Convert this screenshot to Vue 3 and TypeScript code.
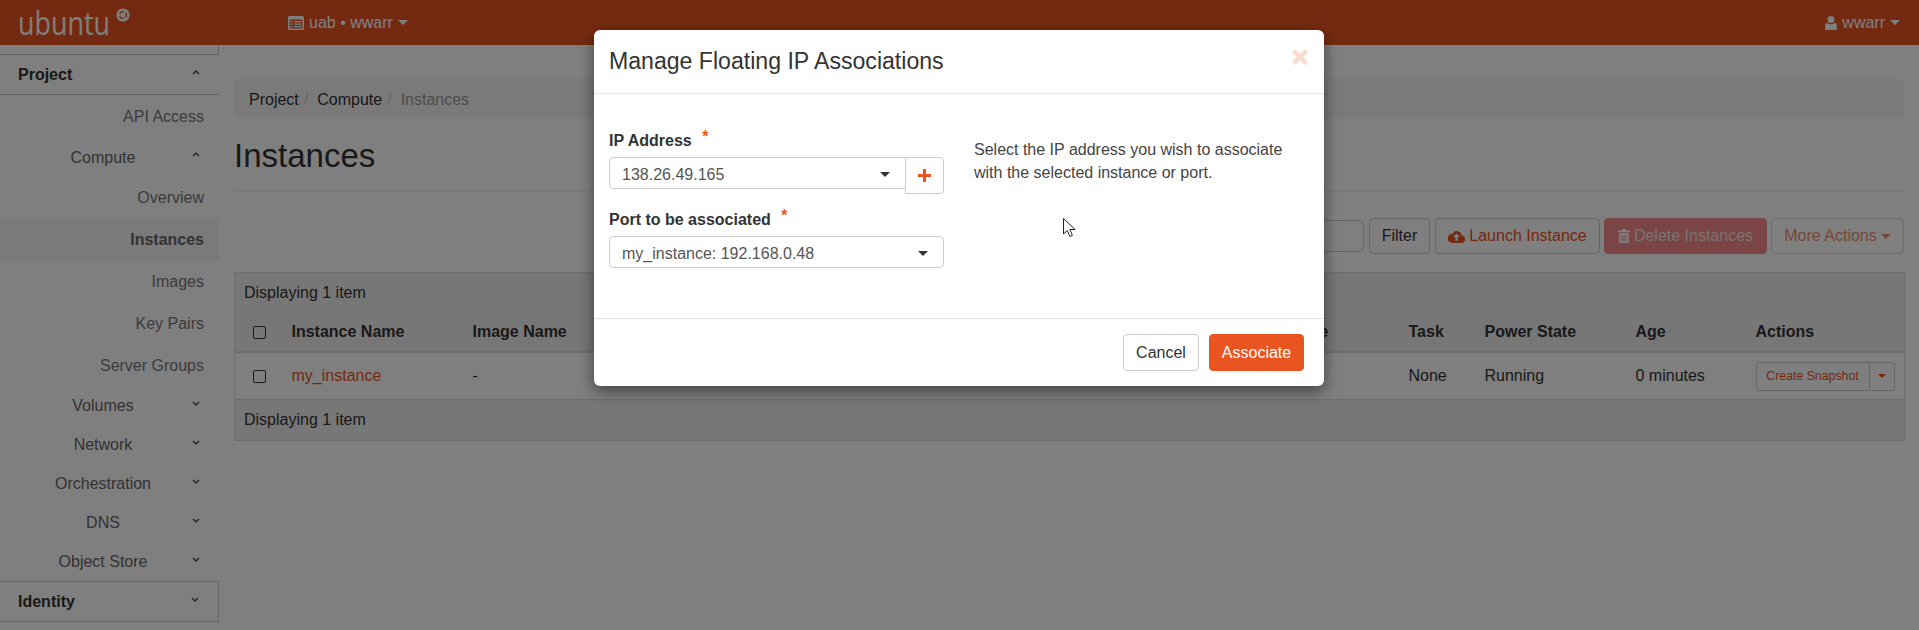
<script setup lang="ts">
interface NavItem {
  label: string
  kind: 'leaf' | 'group' | 'compute' | 'overview'
  active?: boolean
}

const navItems: NavItem[] = [
  { label: 'API Access', kind: 'leaf' },
  { label: 'Compute', kind: 'compute' },
  { label: 'Overview', kind: 'overview' },
  { label: 'Instances', kind: 'leaf', active: true },
  { label: 'Images', kind: 'leaf' },
  { label: 'Key Pairs', kind: 'leaf' },
  { label: 'Server Groups', kind: 'leaf' },
  { label: 'Volumes', kind: 'group' },
  { label: 'Network', kind: 'group' },
  { label: 'Orchestration', kind: 'group' },
  { label: 'DNS', kind: 'group' },
  { label: 'Object Store', kind: 'group' },
]

const columns = ['Instance Name', 'Image Name', 'Availability Zone', 'Task', 'Power State', 'Age', 'Actions']
</script>

<template>
  <div class="page">
    <header class="navbar">
      <div class="brand">
        <span class="brand-word">ubuntu</span>
        <svg class="brand-mark" viewBox="0 0 14 14" width="14" height="14">
          <circle cx="7" cy="7" r="6.6" fill="#fff" />
          <circle cx="7" cy="7" r="3.4" fill="none" stroke="#e95420" stroke-width="1.4" />
          <circle cx="3.3" cy="7" r="1.1" fill="#fff" />
          <circle cx="8.9" cy="3.8" r="1.1" fill="#fff" />
          <circle cx="8.9" cy="10.2" r="1.1" fill="#fff" />
        </svg>
      </div>
      <div class="nav-project">
        <svg class="table-icon" viewBox="0 0 16 14" width="16" height="14">
          <path d="M1.500 0h13A1.500 1.500 0 0 1 16 1.500v11a1.500 1.500 0 0 1-1.500 1.500h-13A1.500 1.500 0 0 1 0 12.500v-11A1.500 1.500 0 0 1 1.500 0zM1.500 3.500v9h13v-9zm1 1.500h2v1.300h-2zm3.500 0h7.500v1.300H6zM2.500 7.500h2v1.300h-2zm3.500 0h7.500v1.300H6zM2.500 10h2v1.300h-2zm3.500 0h7.500v1.300H6z" fill="#fff" fill-rule="evenodd" />
        </svg>
        <span>uab • wwarr</span>
        <i class="caret" />
      </div>
      <div class="nav-user">
        <svg viewBox="0 0 12 14" width="12" height="14">
          <path d="M6 0a3.500 3.500 0 0 1 3.500 3.500A3.500 3.500 0 0 1 6 7 3.500 3.500 0 0 1 2.500 3.500 3.500 3.500 0 0 1 6 0zM2.300 6.800C3.300 7.800 4.600 8.300 6 8.300s2.700-.5 3.700-1.500C11.300 7 12 8.400 12 10.500v2c0 1-.6 1.500-1.500 1.500h-9C.6 14 0 13.500 0 12.500v-2C0 8.400.7 7 2.300 6.800z" fill="#fff" />
        </svg>
        <span>wwarr</span>
        <i class="caret" />
      </div>
    </header>

    <div class="layout">
      <aside class="sidebar">
        <div class="side-stub" />
        <div class="side-head side-head--open">
          <span>Project</span>
          <svg class="chev" viewBox="0 0 8 5" width="8" height="5"><path d="M1 4l3-3 3 3" /></svg>
        </div>
        <div
          v-for="item in navItems"
          :key="item.label"
          class="side-item"
          :class="[`side-item--${item.kind}`, { 'side-item--active': item.active }]"
        >
          <span>{{ item.label }}</span>
          <svg v-if="item.kind === 'compute'" class="chev" viewBox="0 0 8 5" width="8" height="5"><path d="M1 4l3-3 3 3" /></svg>
          <svg v-if="item.kind === 'group'" class="chev" viewBox="0 0 8 5" width="8" height="5"><path d="M1 1l3 3 3-3" /></svg>
        </div>
        <div class="side-head side-head--closed">
          <span>Identity</span>
          <svg class="chev" viewBox="0 0 8 5" width="8" height="5"><path d="M1 1l3 3 3-3" /></svg>
        </div>
      </aside>

      <main class="content">
        <nav class="breadcrumb">
          <span>Project</span><em>/</em>
          <span>Compute</span><em>/</em>
          <span class="crumb-current">Instances</span>
        </nav>
        <div class="page-header">
          <h1>Instances</h1>
        </div>
        <div class="toolbar">
          <div class="search" />
          <button class="btn btn-filter">Filter</button>
          <button class="btn btn-launch">
            <svg viewBox="0 0 16 12" width="17" height="13">
              <path d="M12.800 5A4.500 4.500 0 0 0 4.200 3.600 3.500 3.500 0 0 0 3.500 12h9a3.500 3.500 0 0 0 .3-7zM8 3l3.200 3.500H9.200V10H6.800V6.500H4.800z" fill="#e95420" fill-rule="evenodd" />
            </svg>
            Launch Instance
          </button>
          <button class="btn btn-delete">
            <svg viewBox="0 0 11 13" width="12" height="14">
              <path d="M3.500 1.500 4.200 0h2.600l.7 1.500H11V3H0V1.500zM1 4h9v8a1 1 0 0 1-1 1H2a1 1 0 0 1-1-1zm2 1.500V11.500h1V5.500zm2 0V11.500h1V5.500zm2 0V11.500h1V5.500z" fill="#fff" fill-rule="evenodd" />
            </svg>
            Delete Instances
          </button>
          <button class="btn btn-more">More Actions <i class="caret" /></button>
        </div>

        <table class="table">
          <colgroup>
            <col class="col-check" />
            <col class="col-name" />
            <col class="col-image" />
            <col class="col-zone" />
            <col class="col-task" />
            <col class="col-power" />
            <col class="col-age" />
            <col class="col-actions" />
          </colgroup>
          <thead>
            <tr class="row-summary"><td colspan="8">Displaying 1 item</td></tr>
            <tr class="row-head">
              <th><span class="check" /></th>
              <th v-for="col in columns" :key="col">{{ col }}</th>
            </tr>
          </thead>
          <tbody>
            <tr class="row-data">
              <td><span class="check" /></td>
              <td class="link">my_instance</td>
              <td>-</td>
              <td>nova</td>
              <td>None</td>
              <td>Running</td>
              <td>0 minutes</td>
              <td>
                <div class="split">
                  <span class="split-main">Create Snapshot</span>
                  <span class="split-toggle"><i class="caret" /></span>
                </div>
              </td>
            </tr>
          </tbody>
          <tfoot>
            <tr class="row-summary row-summary--foot"><td colspan="8">Displaying 1 item</td></tr>
          </tfoot>
        </table>
      </main>
    </div>

    <div class="backdrop">
      <section class="modal">
        <div class="modal-header">
          <h3>Manage Floating IP Associations</h3>
          <svg class="close" viewBox="0 0 16 16" width="16" height="16">
            <path d="M1.500 1.500l13 13M14.500 1.500l-13 13" />
          </svg>
        </div>
        <div class="modal-body">
          <form class="form">
            <label>IP Address <b>*</b></label>
            <div class="ip-row">
              <div class="select">138.26.49.165<i class="caret" /></div>
              <span class="plus-btn">
                <svg viewBox="0 0 13 13" width="13" height="13"><path d="M5 0h3v5h5v3H8v5H5V8H0V5h5z" fill="#e95420" /></svg>
              </span>
            </div>
            <label>Port to be associated <b>*</b></label>
            <div class="select">my_instance: 192.168.0.48<i class="caret" /></div>
          </form>
          <p class="help">Select the IP address you wish to associate with the selected instance or port.</p>
        </div>
        <div class="modal-footer">
          <button class="btn btn-cancel">Cancel</button>
          <button class="btn btn-primary">Associate</button>
        </div>
      </section>
      <svg class="pointer" viewBox="0 0 13 20" width="13" height="20">
        <path d="M.5.5v15.500l3.800-3.500 2.500 6 2.600-1.100-2.500-5.900h5.200z" fill="#fff" stroke="#222" stroke-width="1" stroke-linejoin="round" />
      </svg>
    </div>
  </div>
</template>

<style>
html, body { margin: 0; overflow: hidden; }
</style>

<style scoped>
.page {
  position: relative;
  height: 630px;
  overflow: hidden;
  background: #fff;
  color: #333;
  font: 16px/20px "Liberation Sans", Arial, sans-serif;
}
.navbar {
  display: flex;
  align-items: center;
  height: 45px;
  background: #e95420;
  color: #fff;
}
.brand {
  width: 288px;
  padding-left: 18px;
  box-sizing: border-box;
}
.brand-word {
  font: 400 32px/45px "Open Sans", sans-serif;
  display: inline-block;
  transform: scaleX(0.84);
  transform-origin: left center;
}
.brand-mark { position: absolute; left: 116px; top: 8px; }
.nav-project, .nav-user { display: flex; align-items: center; gap: 5px; }
.nav-user { margin-left: auto; margin-right: 19px; }
.caret {
  display: inline-block;
  width: 0;
  height: 0;
  border-top: 5px solid currentColor;
  border-left: 5px solid transparent;
  border-right: 5px solid transparent;
}

.layout { display: flex; }
.sidebar { width: 219px; flex: none; }
.side-stub {
  height: 9px;
  border-bottom: 1px solid #ccc;
  border-right: 1px solid #ccc;
}
.side-head {
  display: flex;
  align-items: center;
  justify-content: space-between;
  padding: 0 19px 0 18px;
  font-weight: 700;
  box-sizing: border-box;
}
.side-head--open { height: 40px; border-bottom: 1px solid #ccc; color: #333; }
.side-head--closed { height: 41px; border: 1px solid #ccc; border-left: 0; color: #333; }
.chev { fill: none; stroke: #333; stroke-width: 1.2; position: relative; top: -2px; flex: none; }
.side-item {
  position: relative;
  display: flex;
  align-items: center;
  padding-top: 2px;
  color: #777;
  box-sizing: border-box;
}
.side-item--leaf, .side-item--overview { justify-content: flex-end; padding-right: 15px; height: 42px; }
.side-item--overview { height: 41px; padding-top: 0; }
.side-item--group, .side-item--compute { justify-content: center; width: 206px; height: 39px; color: #666; }
.side-item--group { padding-top: 1px; }
.side-item--group .chev, .side-item--compute .chev { position: absolute; right: 6px; top: 15px; }
.side-item--compute { height: 40px; }
.side-item--active { background: #f5f5f5; font-weight: 700; color: #666; }

.content { flex: 1; padding: 34px 15px 0; min-width: 0; }
.breadcrumb {
  height: 40px;
  padding: 2px 15px 0;
  display: flex;
  align-items: center;
  background: #f5f5f5;
  border-radius: 4px;
  box-sizing: border-box;
  color: #333;
}
.breadcrumb em { font-style: normal; color: #ccc; margin: 0 9px 0 5px; }
.crumb-current { color: #999; }
.page-header { padding: 20px 0 18px; border-bottom: 1px solid #eee; }
.page-header h1 { margin: 0; font-size: 33px; font-weight: 400; line-height: 34px; color: #333; }

.toolbar { display: flex; justify-content: flex-end; align-items: center; margin-top: 26px; height: 36px; }
.search {
  width: 400px;
  height: 32px;
  box-sizing: border-box;
  border: 1px solid #ccc;
  border-radius: 4px;
  margin-right: 5px;
}
.btn {
  display: inline-flex;
  align-items: center;
  justify-content: center;
  gap: 4px;
  height: 36px;
  padding: 0;
  border: 1px solid #ccc;
  border-radius: 4px;
  background: #fff;
  color: #333;
  font: 16px/20px "Liberation Sans", Arial, sans-serif;
  box-sizing: border-box;
}
.btn-filter { width: 61px; margin-right: 5px; }
.btn-launch { width: 165px; margin-right: 4px; color: #e95420; }
.btn-delete { width: 163px; margin-right: 4px; background: #f48a88; border-color: #f48a88; color: #f4e4e4; }
.btn-more { width: 133px; color: #e95420; opacity: 0.65; }

.table {
  width: 1670px;
  margin-top: 18px;
  table-layout: fixed;
  border-collapse: collapse;
  border: 1px solid #ddd;
}
.col-check { width: 57px; }
.col-name { width: 181px; }
.col-image { width: 729px; }
.col-zone { width: 207px; }
.col-task { width: 76px; }
.col-power { width: 151px; }
.col-age { width: 120px; }
.col-actions { width: 149px; }
.table td, .table th { padding: 0; text-align: left; }
.row-summary { background: #eee; }
.row-summary td { height: 40px; padding-left: 9px; }
.row-head { background: #eee; border-bottom: 2px solid #ddd; }
.row-head th { height: 38px; font-weight: 700; }
.row-data { background: #fff; border-bottom: 1px solid #ddd; }
.row-data td { height: 46px; }
.check {
  display: block;
  width: 11px;
  height: 11px;
  margin-left: 18px;
  border: 1px solid #333;
  border-radius: 2px;
}
.link { color: #e95420; }
.split {
  display: flex;
  width: 139px;
  height: 29px;
  border: 1px solid #ccc;
  border-radius: 3px;
  box-sizing: border-box;
  font-size: 12.3px;
  color: #e95420;
}
.split-main { flex: 1; display: flex; align-items: center; justify-content: center; }
.split-toggle { width: 24px; display: flex; align-items: center; justify-content: center; border-left: 1px solid #ccc; }
.split-toggle .caret { border-top-width: 4px; border-left-width: 4px; border-right-width: 4px; }

.backdrop { position: absolute; inset: 0; background: rgba(0, 0, 0, 0.5); }
.modal {
  width: 730px;
  margin: 30px 0 0 594px;
  background: #fff;
  border-radius: 6px;
  box-shadow: 0 5px 15px rgba(0, 0, 0, 0.5);
  color: #333;
}
.modal-header {
  display: flex;
  align-items: center;
  justify-content: space-between;
  height: 61px;
  padding: 0 16px 2px 15px;
  border-bottom: 1px solid #e5e5e5;
  box-sizing: content-box;
}
.modal-header h3 { margin: 0; font-size: 23.1px; font-weight: 400; line-height: 28px; }
.close { fill: none; stroke: #e95420; stroke-width: 4.5; opacity: 0.2; position: relative; top: -4px; }
.modal-body { display: flex; height: 224px; padding: 37px 15px 0; box-sizing: border-box; font-size: 16px; }
.form { width: 335px; flex: none; }
.form label { display: block; font-weight: 700; line-height: 20px; margin-bottom: 6px; }
.form label b { color: #e95420; margin-left: 6px; position: relative; top: -4px; }
.ip-row { display: flex; align-items: flex-start; margin-bottom: 16px; }
.select {
  position: relative;
  flex: 1;
  height: 32px;
  line-height: 34px;
  padding-left: 12px;
  border: 1px solid #ccc;
  border-radius: 4px;
  box-sizing: border-box;
  color: #555;
}
.select .caret { position: absolute; right: 15px; top: 14px; color: #333; }
.ip-row .select { border-radius: 4px 0 0 4px; }
.plus-btn {
  display: flex;
  align-items: center;
  justify-content: center;
  width: 39px;
  height: 37px;
  margin-left: -1px;
  border: 1px solid #ccc;
  border-radius: 0 4px 4px 0;
  box-sizing: border-box;
}
.help { width: 320px; margin: 7px 0 0 30px; line-height: 23px; color: #444; }
.modal-footer {
  display: flex;
  justify-content: flex-end;
  gap: 10px;
  padding: 15px 20px 15px 15px;
  border-top: 1px solid #e5e5e5;
}
.btn-cancel, .btn-primary { height: 37px; }
.btn-cancel { width: 76px; }
.btn-primary { width: 95px; background: #e95420; border-color: #e95420; color: #fff; }
.pointer { position: absolute; left: 1063px; top: 218px; }
</style>
